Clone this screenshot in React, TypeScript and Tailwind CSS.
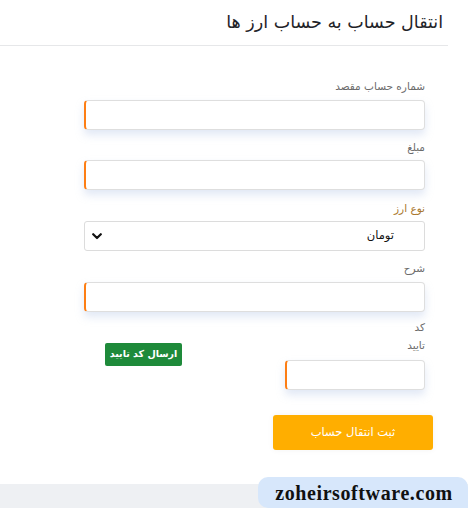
const field =
  "h-[30px] w-full rounded-[4px] border border-[#dedede] border-l-2 border-l-[#fd7e14] bg-white shadow-[0_5px_8px_rgba(170,190,225,0.35)]";

const Label = ({ children, tone = "text-[#6b6b6b]" }: { children: React.ReactNode; tone?: string }) => (
  <div className={`h-4 text-[10.5px] leading-4 ${tone}`}>{children}</div>
);

const ChevronDown = () => (
  <svg width="10" height="7" viewBox="0 0 10 7" aria-hidden="true">
    <path d="M1.2 1.2 5 5 8.8 1.2" fill="none" stroke="#111" strokeWidth="2.2" strokeLinecap="round" strokeLinejoin="round" />
  </svg>
);

export default function App() {
  return (
    <div
      className="relative flex h-[508px] w-[468px] flex-col overflow-hidden bg-white"
      style={{ fontFamily: '"DejaVu Sans", "Noto Sans", sans-serif' }}
    >
      <div className="h-[484px] w-[448px]" dir="rtl">
        <div className="flex h-[46px] items-center border-b border-[#e6e7e9] pr-[5px]">
          <h1 className="text-[17.5px] font-normal text-[#1f2328]">انتقال حساب به حساب ارز ها</h1>
        </div>

        <div className="flex flex-col pl-[84px] pr-[23px] pt-[32px]">
          <Label>شماره حساب مقصد</Label>
          <div className={`mt-[6px] ${field}`} />

          <div className="mt-[9px]">
            <Label>مبلغ</Label>
          </div>
          <div className={`mt-[5px] ${field}`} />

          <div className="mt-[10px]">
            <Label tone="text-[#a9782e]">نوع ارز</Label>
          </div>
          <div className="mt-[5px] flex h-[30px] w-full items-center justify-between rounded-[3px] border border-[#dcdcdc] bg-white pl-[7px] pr-[30px]">
            <span className="text-[11.5px] text-[#111]">تومان</span>
            <ChevronDown />
          </div>

          <div className="mt-[9px]">
            <Label>شرح</Label>
          </div>
          <div className={`mt-[6px] ${field}`} />

          <div className="mt-[7px] flex items-start justify-between">
            <div className="flex w-[140px] flex-col">
              <Label>کد</Label>
              <div className="mt-[2px]">
                <Label>تایید</Label>
              </div>
              <div className={`mt-[7px] ${field}`} />
            </div>
            <button className="ml-[21px] mt-[24px] h-[23px] w-[77px] rounded-[2px] bg-[#1e8a3a] text-[9.5px] font-bold text-white">
              ارسال کد تایید
            </button>
          </div>

          <button className="mr-[-8px] mt-[25px] h-[35px] w-[160px] self-start rounded-[3px] bg-[#ffae00] text-[11.5px] text-white shadow-[0_0_6px_rgba(0,0,0,0.05)]">
            ثبت انتقال حساب
          </button>
        </div>
      </div>

      <div className="h-[24px] w-full bg-[#eef0f3]" />

      <div className="absolute bottom-0 right-0 flex h-[31px] w-[210px] items-center justify-center rounded-tl-[10px] rounded-tr-[10px] rounded-bl-[10px] bg-[#d7e7fb] pl-[2px]">
        <span
          className="text-[20px] font-bold tracking-[0.6px] text-[#111]"
          style={{ fontFamily: '"Liberation Serif", serif' }}
        >
          zoheirsoftware.com
        </span>
      </div>
    </div>
  );
}
